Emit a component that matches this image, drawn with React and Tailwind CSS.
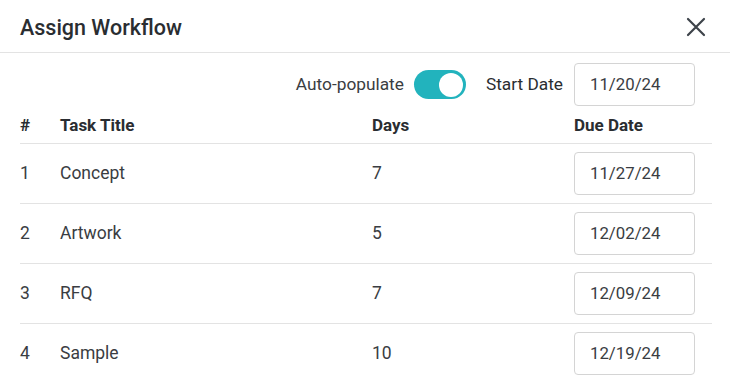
import React from "react";

const rows = [
  { n: 1, title: "Concept", days: 7, due: "11/27/24" },
  { n: 2, title: "Artwork", days: 5, due: "12/02/24" },
  { n: 3, title: "RFQ", days: 7, due: "12/09/24" },
  { n: 4, title: "Sample", days: 10, due: "12/19/24" },
];

function DateBox({ value }) {
  return (
    <div className="w-[121px] h-[43px] border border-[#d4d4d4] rounded-[4px] bg-white flex items-center pl-[15px] text-[16.8px] text-[#3a3d42]">
      {value}
    </div>
  );
}

export default function App() {
  return (
    <div className="w-[730px] h-[378px] bg-white overflow-hidden text-[#33373c]" style={{ fontFamily: "Roboto, 'Liberation Sans', sans-serif" }}>
      <div className="h-[53px] border-b border-[#e3e3e3] flex items-center justify-between pl-5 pr-[24px]">
        <div className="text-[21.5px] font-medium text-[#2a2d31] leading-none pt-[3px]">Assign Workflow</div>
        <svg width="20" height="20" viewBox="0 0 20 20" className="text-[#3d434a] mt-[2px]">
          <path d="M2 2 L18 18 M18 2 L2 18" stroke="currentColor" strokeWidth="2.2" strokeLinecap="round" />
        </svg>
      </div>
      <div className="pl-5 pr-[18px]">
        <div className="flex items-center justify-end pt-[10px] pr-[17px] text-[17.3px]">
          <span className="text-[#3a3d42]">Auto-populate</span>
          <div className="ml-[10px] w-[52px] h-[29px] rounded-full bg-[#22b3bd] flex items-center justify-end pr-[3px]">
            <div className="w-[24px] h-[24px] rounded-full bg-white"></div>
          </div>
          <span className="ml-5 text-[#2a2d31]">Start Date</span>
          <div className="ml-[11px]">
            <DateBox value="11/20/24" />
          </div>
        </div>
        <div className="grid grid-cols-[40px_312px_202px_1fr] h-[38px] items-center border-b border-[#e3e3e3] font-bold text-[17px] text-[#2a2d31] pt-[3px]">
          <div>#</div>
          <div>Task Title</div>
          <div>Days</div>
          <div>Due Date</div>
        </div>
        {rows.map((r, i) => (
          <div
            key={r.n}
            className={`grid grid-cols-[40px_312px_202px_1fr] items-center py-2 text-[17.5px] text-[#3a3d42] ${i < rows.length - 1 ? "border-b border-[#e3e3e3]" : ""}`}
          >
            <div>{r.n}</div>
            <div>{r.title}</div>
            <div>{r.days}</div>
            <div>
              <DateBox value={r.due} />
            </div>
          </div>
        ))}
      </div>
    </div>
  );
}
